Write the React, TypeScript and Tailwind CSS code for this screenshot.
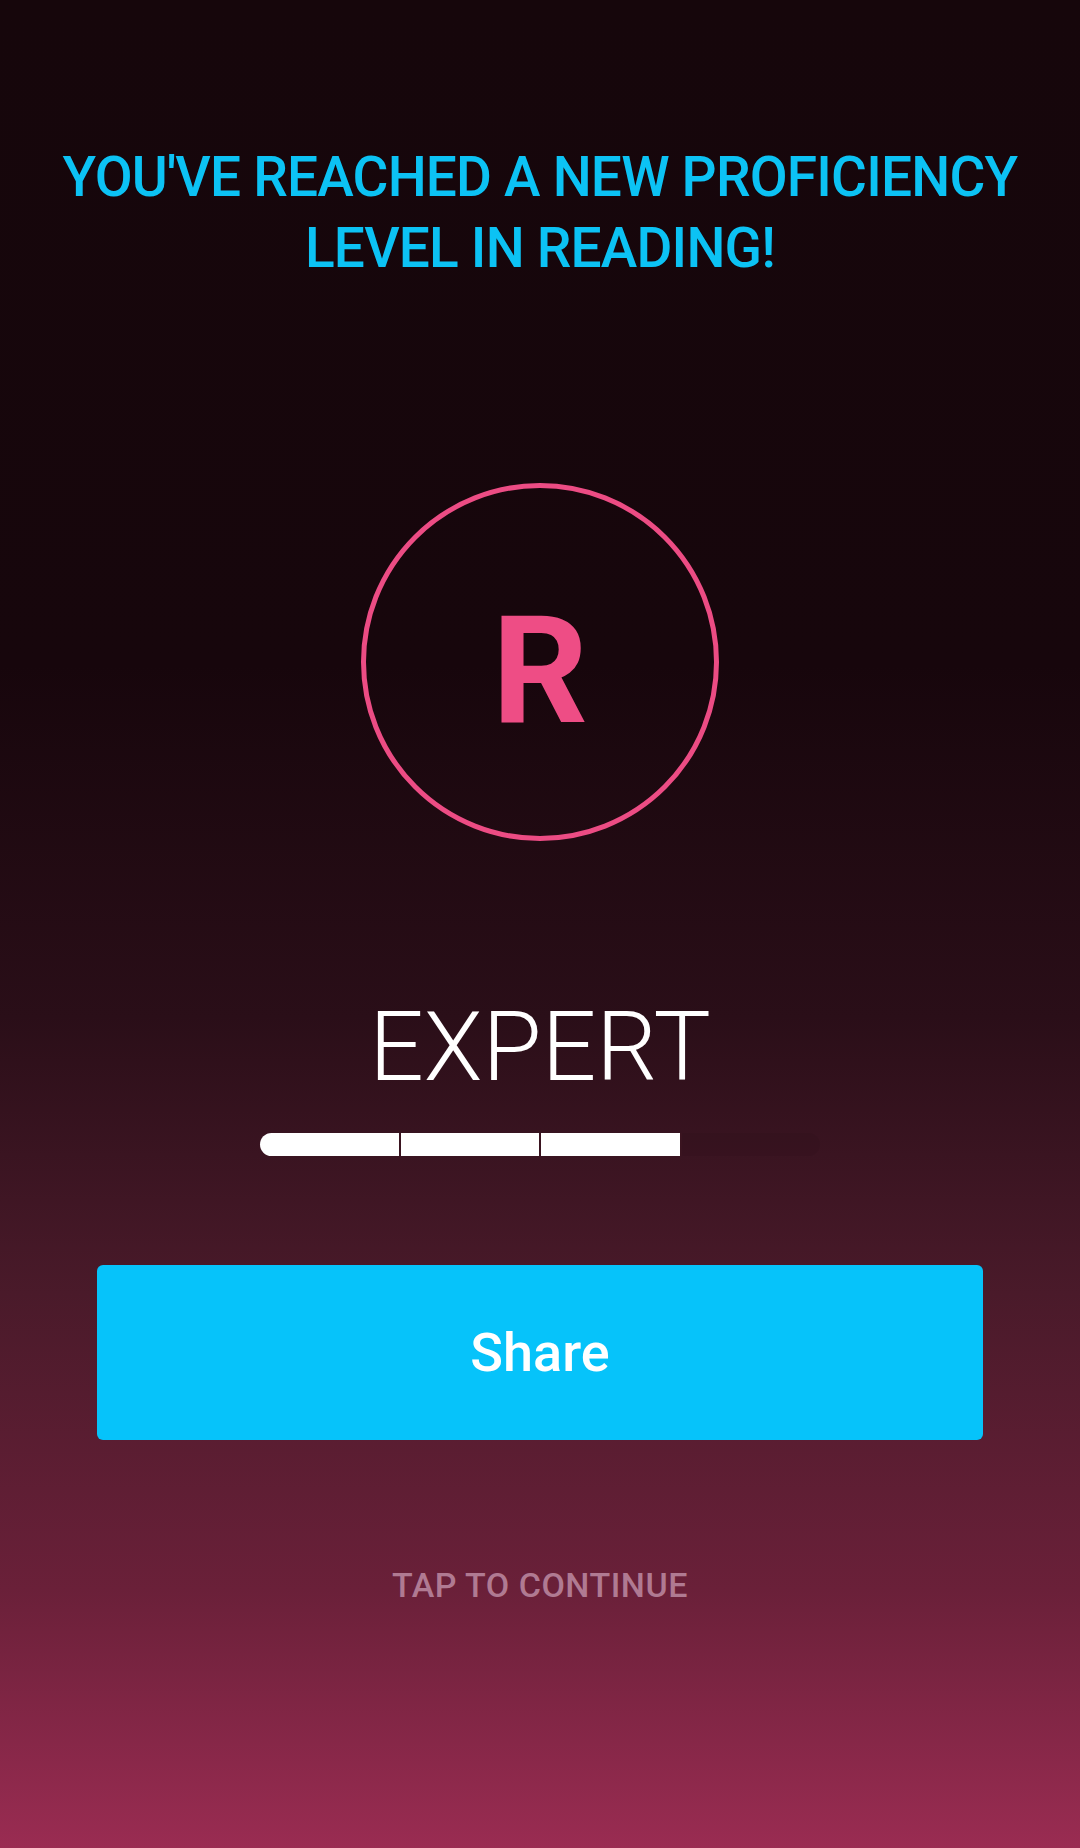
import React from 'react';

const segments = [true, true, true, false];

function LevelBar() {
  return (
    <div className="flex w-[560px] h-[23px]">
      {segments.map((filled, i) => (
        <div
          key={i}
          className={
            (filled ? 'bg-white ' : 'bg-black/5 ') +
            (i === 0 ? 'rounded-l-full ' : 'border-l-2 border-[#3a1420] ') +
            (i === segments.length - 1 ? 'rounded-r-full ' : '') +
            'flex-1'
          }
        />
      ))}
    </div>
  );
}

export default function App() {
  return (
    <main
      className="w-[1080px] h-[1848px] flex flex-col items-center bg-[linear-gradient(to_bottom,#16060b_0%,#17060c_36%,#2a0e18_55%,#4a1a2a_70%,#6a2039_86%,#9a2c52_100%)] font-['Roboto',sans-serif]"
    >
      <h1 className="mt-[142px] text-center text-[#0cc2f4] text-[55px] leading-[71px] font-medium tracking-[-0.8px] uppercase">
        You've reached a new proficiency
        <br />
        level in reading!
      </h1>

      {/* badge */}
      <div className="mt-[199px] w-[358px] h-[358px] rounded-full border-[5px] border-[#ec4c84] flex items-center justify-center">
        <span className="pt-[20px] text-[150px] leading-none font-bold text-[#ee4d85]">R</span>
      </div>

      <div className="mt-[158px] text-white text-[96px] leading-none font-light">EXPERT</div>

      <div className="mt-[38px]">
        <LevelBar />
      </div>

      <button className="mt-[109px] w-[886px] h-[175px] rounded-[6px] bg-[#06c3fa] text-white text-[54px] font-medium">
        Share
      </button>

      <div className="mt-[120px] text-[34px] font-medium text-[#b07a92] tracking-[0.5px]">
        TAP TO CONTINUE
      </div>
    </main>
  );
}
